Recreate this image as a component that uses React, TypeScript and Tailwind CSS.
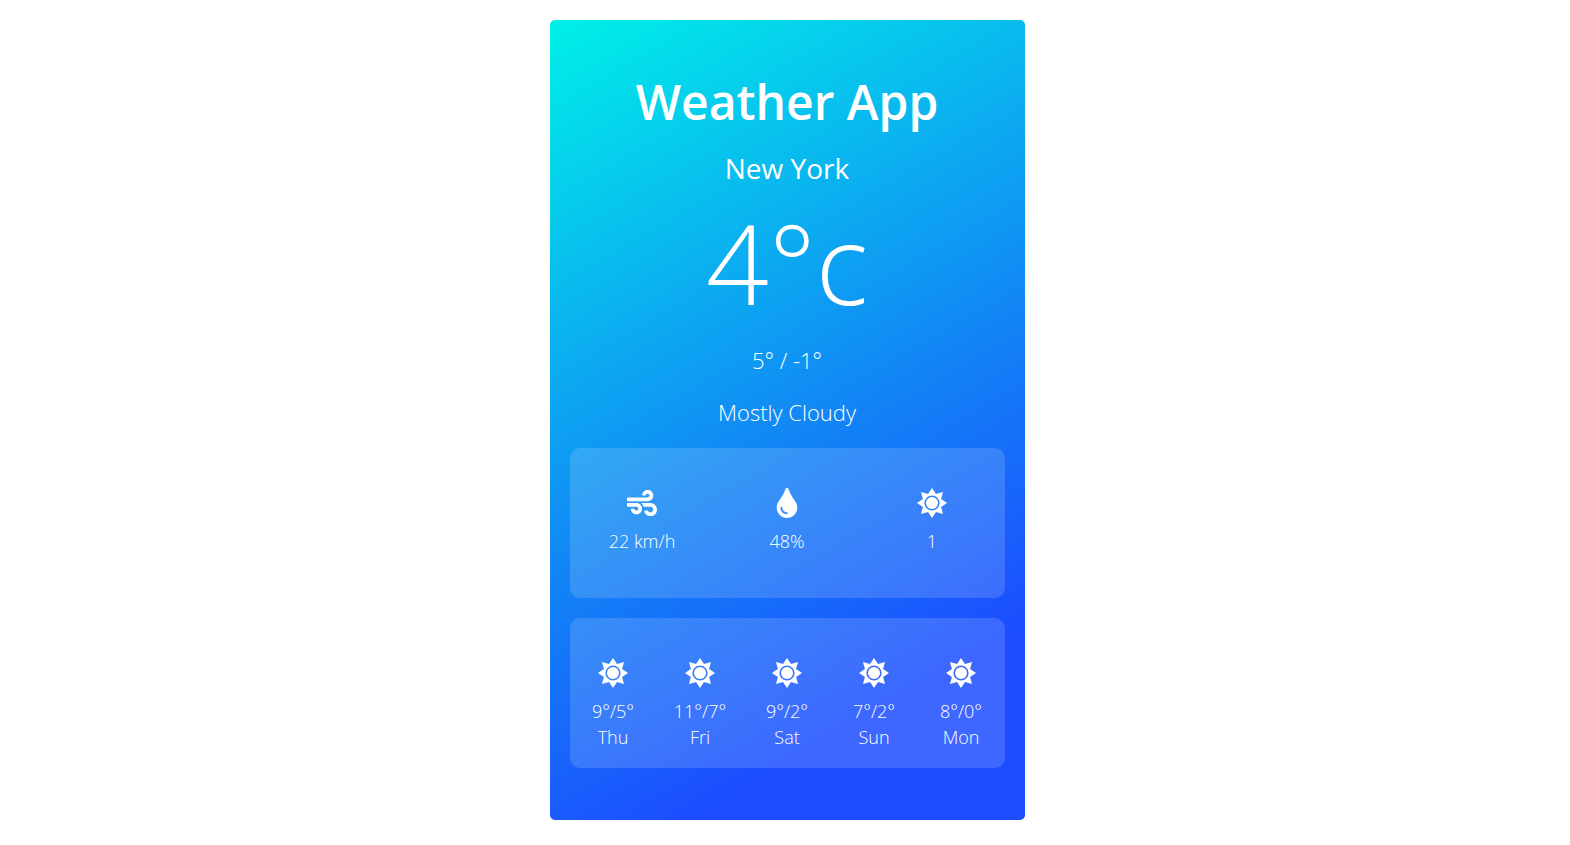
import { FaTint, FaWind } from "react-icons/fa";

function Sun() {
  return (
    <svg viewBox="0 0 30 30" className="size-[30px]" fill="currentColor" aria-hidden="true">
      <path
        fillRule="evenodd"
        d="M15 0 L19 5.900 L26 4 L24.100 11 L30 15 L24.100 19 L26 26 L19 24.100 L15 30 L11 24.100 L4 26 L5.900 19 L0 15 L5.900 11 L4 4 L11 5.900 Z M15 7.400 a7.600 7.600 0 1 0 0 15.200 a7.600 7.600 0 1 0 0 -15.200 Z"
      />
      <circle cx="15" cy="15" r="6" />
    </svg>
  );
}

const days = [
  ["9°/5°", "Thu"],
  ["11°/7°", "Fri"],
  ["9°/2°", "Sat"],
  ["7°/2°", "Sun"],
  ["8°/0°", "Mon"],
];

export default function App() {
  return (
    <div className="bg-white py-5 pr-5 pl-6 font-['Open_Sans',sans-serif]">
      <main className="mx-auto flex min-h-[800px] w-full max-w-[475px] flex-col items-center rounded-[5px] bg-[linear-gradient(150deg,#00f0e8_0%,#1285f5_52%,#1c4dff_82%)] px-5 pt-[50px] text-center font-light text-white">
        <h1 className="text-5xl leading-[64px] font-semibold">Weather App</h1>
        <h2 className="mt-3.5 text-[28px] leading-[40px] font-normal">New York</h2>
        <p className="text-[110px] leading-[148px]">4°c</p>
        <p className="mt-2 text-[22px] leading-[32px]">5° / -1°</p>
        <p className="mt-5 text-[22px] leading-[32px]">Mostly Cloudy</p>
        <section aria-label="Current conditions" className="mt-5 grid h-[150px] w-full grid-cols-3 rounded-[10px] bg-white/15 pt-10 text-lg leading-[26px]">
          <div className="flex flex-col items-center"><FaWind className="size-[30px]" /><p className="mt-2.5">22 km/h</p></div>
          <div className="flex flex-col items-center"><FaTint className="size-[30px]" /><p className="mt-2.5">48%</p></div>
          <div className="flex flex-col items-center"><Sun /><p className="mt-2.5">1</p></div>
        </section>
        <section aria-label="Forecast" className="mt-5 grid h-[150px] w-full grid-cols-5 rounded-[10px] bg-white/15 pt-10 text-lg leading-[26px]">
          {days.map(([range, day]) => (
            <div key={day} className="flex flex-col items-center">
              <Sun />
              <p className="mt-2.5">{range}</p>
              <p>{day}</p>
            </div>
          ))}
        </section>
      </main>
    </div>
  );
}
